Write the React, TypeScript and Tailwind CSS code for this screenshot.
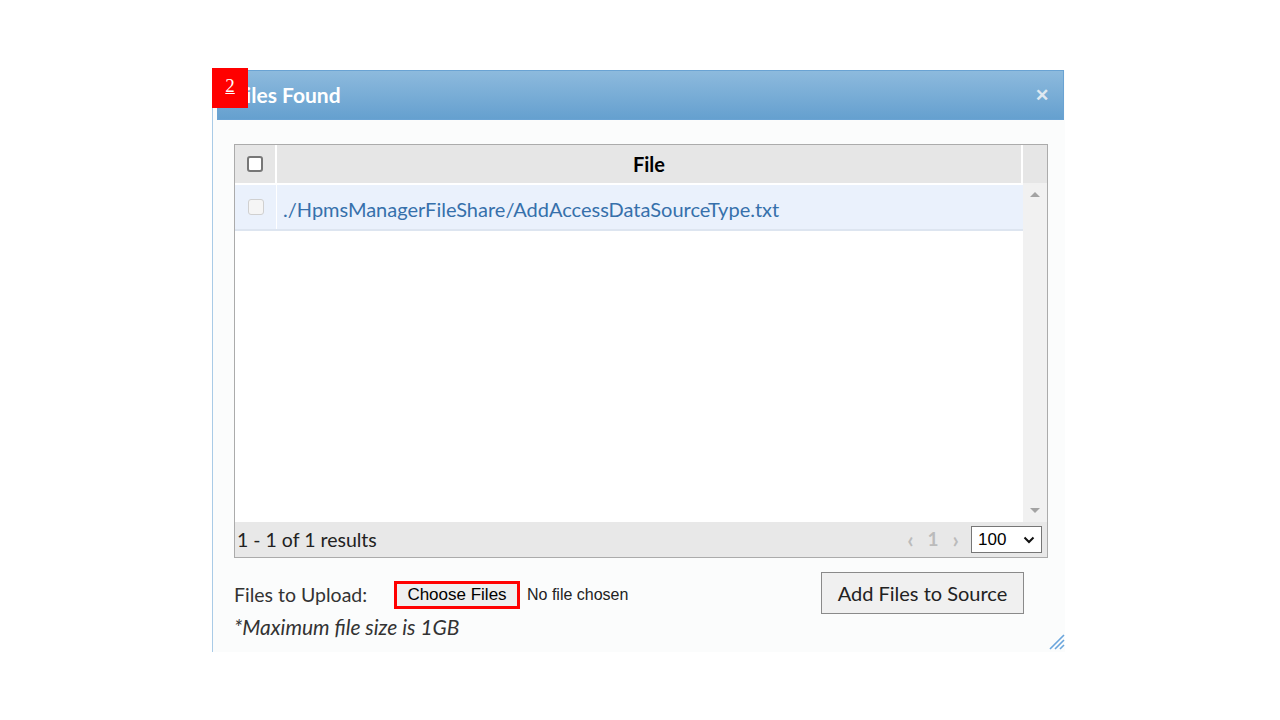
import React from "react"

const font = { fontFamily: "Lato, 'Open Sans', sans-serif" }

function Grip() {
  return (
    <svg width="18" height="18" viewBox="0 0 18 18" className="absolute right-0 bottom-[2px]">
      <path d="M17 3 L3 17 M17 8 L8 17 M17 13 L13 17" stroke="#6aa5dc" strokeWidth="1.6" />
    </svg>
  )
}

export default function App() {
  return (
    <div className="min-h-screen w-full bg-white pt-[70px] pl-[212px]" style={font}>
      <div className="relative w-[853px] h-[582px] border-l border-[#a9cbe7] bg-[#fbfcfc]">
        {/* Badge */}
        <div className="absolute -left-[1px] -top-[2px] z-10 flex h-[40px] w-[36px] items-center justify-center bg-[#ff0000]">
          <span className="-mt-[4px] text-white text-[19px] underline" style={{ fontFamily: "'Liberation Serif', serif" }}>
            2
          </span>
        </div>

        {/* Title bar */}
        <div className="ml-[4px] flex h-[50px] w-[847px] items-center justify-between border border-[#6aa3d3] bg-gradient-to-b from-[#8dbadd] to-[#65a0cf] pl-[16px] pr-[14px]">
          <span className="text-[21px] font-bold text-white">Files Found</span>
          <span className="text-[17px] font-bold leading-none text-[#dfe8f1]" style={{ fontFamily: "Arial, 'Liberation Sans', sans-serif" }}>
            ✕
          </span>
        </div>

        {/* Grid */}
        <div className="ml-[21px] mt-[24px] flex h-[414px] w-[814px] flex-col border border-[#ababab] bg-white">
          <div className="flex h-[38px] bg-[#e6e6e6]">
            <div className="flex w-[42px] items-center justify-center border-r-2 border-white">
              <div className="h-[16px] w-[16px] rounded-[3px] border-2 border-[#777] bg-white" />
            </div>
            <div className="flex flex-1 items-center justify-center border-r-2 border-white text-[20px] font-bold text-black">
              File
            </div>
            <div className="w-[24px]" />
          </div>
          <div className="flex flex-1">
            <div className="flex flex-1 flex-col">
              <div className="mt-[2px] flex h-[46px] border-b-2 border-[#dde5f0] bg-[#eaf1fc]">
                <div className="flex w-[42px] items-center justify-center border-r border-white">
                  <div className="h-[16px] w-[16px] rounded-[3px] border border-[#d0d0d0] bg-[#f5f5f5]" />
                </div>
                <div className="flex items-center pl-[6px] pt-[3px] text-[20px] text-[#3670ab]">
                  ./HpmsManagerFileShare/AddAccessDataSourceType.txt
                </div>
              </div>
            </div>
            <div className="flex w-[24px] flex-col items-center justify-between bg-[#f1f1f1] py-[9px]">
              <div className="h-0 w-0 border-x-[5px] border-b-[5px] border-x-transparent border-b-[#a3a3a3]" />
              <div className="h-0 w-0 border-x-[5px] border-t-[5px] border-x-transparent border-t-[#a3a3a3]" />
            </div>
          </div>
          <div className="flex h-[35px] items-center justify-between bg-[#e8e8e8] pl-[2px] pr-[5px]">
            <span className="text-[19.5px] text-[#222]">1 - 1 of 1 results</span>
            <div className="flex items-center">
              <span className="text-[22px] leading-none text-[#bbb] font-bold">‹</span>
              <span className="ml-[14px] text-[19px] font-bold text-[#bbb]">1</span>
              <span className="ml-[14px] text-[22px] leading-none text-[#bbb] font-bold">›</span>
              <div className="ml-[12px] flex h-[27px] w-[71px] items-center justify-between border border-[#767676] bg-white pl-[6px] pr-[6px]">
                <span className="text-[17px] text-black" style={{ fontFamily: "'Liberation Sans', Arial, sans-serif" }}>100</span>
                <svg width="12" height="8" viewBox="0 0 12 8">
                  <path d="M1.5 1.5 L6 6 L10.5 1.5" fill="none" stroke="#111" strokeWidth="2" />
                </svg>
              </div>
            </div>
          </div>
        </div>

        {/* Upload */}
        <div className="ml-[21px] mt-[14px] flex w-[790px] items-start justify-between">
          <div className="flex flex-col">
            <div className="mt-[8px] flex items-center">
              <span className="w-[160px] text-[19.5px] text-[#333]">Files to Upload:</span>
              <div className="flex h-[28px] w-[126px] items-center justify-center border-[3px] border-[#ff0000] bg-[#efefef]">
                <span className="text-[17px] text-black" style={{ fontFamily: "'Liberation Sans', Arial, sans-serif" }}>Choose Files</span>
              </div>
              <span className="ml-[7px] text-[16px] text-[#222]" style={{ fontFamily: "'Liberation Sans', Arial, sans-serif" }}>
                No file chosen
              </span>
            </div>
            <span className="mt-[2px] text-[21px] italic text-[#333]">*Maximum file size is 1GB</span>
          </div>
          <button className="h-[42px] w-[203px] border border-[#8a8a8a] bg-[#f0f0f0] text-[20px] text-[#222]">
            Add Files to Source
          </button>
        </div>

        <Grip />
      </div>
    </div>
  )
}
